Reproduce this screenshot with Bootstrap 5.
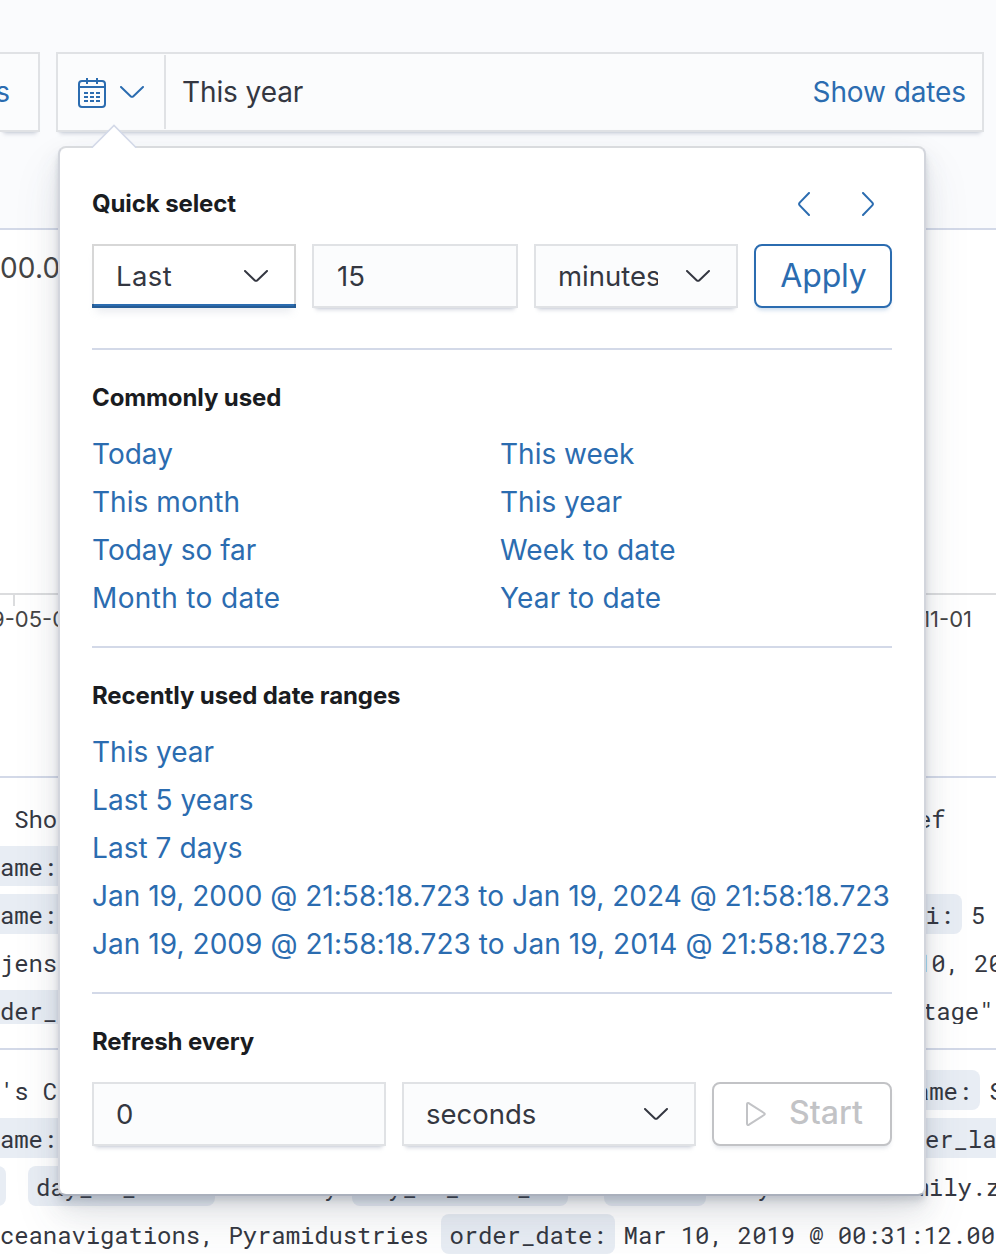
<!DOCTYPE html>
<html lang="en">
<head>
<meta charset="utf-8">
<title>Discover - time filter</title>
<meta name="viewport" content="width=device-width, initial-scale=1">
<link rel="stylesheet" href="https://cdn.jsdelivr.net/npm/bootstrap@5.3.0/dist/css/bootstrap.min.css">
<style>
  :root { --blue: #2b6cb0; --ink: #343741; --field: #fbfcfd; --edge: #e0e2e5; --line: #d3d9e8; }
  body { font-family: Inter, "Liberation Sans", sans-serif; font-size: 28px; line-height: 48px; letter-spacing: -.1px; color: var(--ink); background: #fff; }
  .screen { width: 996px; height: 1254px; }
  svg { display: block; fill: none; stroke: currentColor; stroke-width: 2; stroke-linecap: round; stroke-linejoin: round; }
  .flat { stroke-linecap: butt; }
  .blue { color: var(--blue); }

  /* query bar */
  .querybar { height: 230px; padding-top: 52px; gap: 16px; background: #fafbfd; border-bottom: 2px solid var(--line); }
  .field-box { background: var(--field); border: 2px solid var(--edge); box-shadow: 0 2px 2px -2px rgba(152,162,179,.3), 0 6px 4px -4px rgba(152,162,179,.4); }
  .bar-box { height: 80px; }
  .refresh-tail { width: 40px; border-left: 0; padding-right: 28px; }
  .range-box { width: 928px; }
  .cal-btn { width: 108px; height: 74px; padding-left: 20px; gap: 14px; border-right: 2px solid var(--edge); }
  .cal-icon { margin-top: 2px; }

  /* chart */
  .chart { height: 548px; border-bottom: 2px solid var(--line); color: #444; letter-spacing: 0; }
  .y-label { height: 363px; padding-top: 14px; font-size: 28px; letter-spacing: .2px; }
  .x-axis { height: 2px; background: #dbdcde; }
  .tick { width: 2px; height: 11px; margin-left: 13px; background: #dbdcde; }
  .x-labels { font-size: 22px; line-height: 27px; }
  .x-first { margin-left: -9px; }
  .x-last { margin-right: 24px; }

  /* documents */
  .doc { font-family: "Roboto Mono", "DejaVu Sans Mono", monospace; font-size: 24px; letter-spacing: -.12px; overflow: hidden; }
  .doc-one { height: 272px; padding-top: 16px; border-bottom: 2px solid var(--line); }
  .doc-one .doc-body { height: 230px; overflow: hidden; }
  .doc-two { height: 204px; padding-top: 16px; }
  .doc-line { height: 48px; white-space: pre; }
  .doc-line > :not(.chip):not(.d-flex) { padding-top: 2px; }
  .chip { height: 40px; line-height: 40px; padding: 1px 8px 0; margin-right: 9px; border-radius: 8px; background: #e8edf4; flex: none; }
  .value + .chip { margin-left: 13px; }
  .start-half { width: 900px; flex: none; }
  .from-edge { margin-left: -8px; }
  .chip-end { width: 14px; margin-right: 22px; margin-left: -10px; }
  .t-22 { margin-left: 22px; } .t-17 { margin-left: 17px; } .t-7 { margin-left: 7px; } .t-3 { margin-left: 3px; }

  /* time popover */
  .time-pop { left: 58px; top: 146px; width: 868px; height: 1050px; padding: 32px 32px 0; background: #fff; border: 2px solid #d2d5dc; border-top-color: #d9dbde; border-bottom-color: #aab0bc; border-radius: 8px;
    box-shadow: 0 24px 48px 0 rgba(65,78,101,.1), 0 12px 24px 0 rgba(65,78,101,.1), 0 8px 8px 0 rgba(65,78,101,.1), 0 4px 4px 0 rgba(65,78,101,.1); }
  .pop-arrow { left: 31px; top: -24px; stroke-linejoin: miter; }
  .pop-title { font-size: 24px; font-weight: 700; line-height: 48px; letter-spacing: -.11px; color: #1a1c21; }
  .step-prev { margin-right: 52px; } .step-next { margin-right: 18px; }
  .sep { height: 2px; background: var(--line); }
  .sep-first { margin-top: 40px; }
  .ctl { height: 64px; padding: 0 26px 0 22px; font-size: 27.5px; letter-spacing: 0; border-radius: 0; color: var(--ink); }
  .w-a { width: 204px; } .w-b { width: 206px; } .w-c { width: 294px; }
  input.ctl { background: var(--field); }
  input.w-b { padding-left: 23px; }
  .ctl-focus { border-color: rgba(16,16,16,.17); background: linear-gradient(to top, #2b6cb0 4px, #fff 4px) border-box; box-shadow: 0 8px 8px -4px rgba(152,162,179,.2); letter-spacing: .4px; }
  .clip { width: 100px; overflow: hidden; white-space: nowrap; }
  .act { height: 64px; border: 2px solid; border-radius: 8px; font-size: 32px; line-height: 56px; letter-spacing: -.16px; box-shadow: 0 4px 4px -2px rgba(43,108,176,.25); }
  .act-apply { width: 138px; padding: 0 0 0 1px; color: var(--blue); }
  .act-start { width: 180px; padding: 0 0 0 5px; color: #c2c3c6; gap: 23px; letter-spacing: .1px; font-weight: 500; box-shadow: 0 4px 4px -2px rgba(152,162,179,.3); }
  .act span { display: inline-block; margin-top: -2px; }
  .links { display: grid; line-height: 48px; letter-spacing: 0; }
  .links a { color: var(--blue); text-decoration: none; white-space: nowrap; }
  .links-two { grid-template-columns: 408px 1fr; }
  .links .ls-1 { letter-spacing: .02px; } .links .ls-2 { letter-spacing: .05px; } .links .ls-3 { letter-spacing: .17px; } .links .ls-4 { letter-spacing: .35px; }
</style>
<script src="https://cdn.jsdelivr.net/npm/bootstrap@5.3.0/dist/js/bootstrap.bundle.min.js"></script>
</head>
<body class="m-0 overflow-hidden">
<div class="screen position-relative overflow-hidden">

  <header class="querybar d-flex align-items-start">
    <div class="bar-box field-box refresh-tail d-flex align-items-center justify-content-end blue">s</div>
    <div class="bar-box field-box range-box d-flex align-items-center">
      <div class="cal-btn d-flex align-items-center blue">
        <svg class="cal-icon flat" width="28" height="30" viewBox="0 0 28 30"><rect x="1" y="3" width="26" height="26" rx="3"/><path d="M1 9h26M9 0v6M19 0v6"/><path d="M6 15h16M6 19h16M6 23h16" stroke-dasharray="4 2"/></svg>
        <svg width="24" height="12" viewBox="0 0 24 12"><path d="M1 1l9.600 9.200q1.400 1.200 2.800 0L23 1"/></svg>
      </div>
      <span class="ms-3 flex-grow-1">This year</span>
      <span class="blue me-3">Show dates</span>
    </div>
  </header>

  <section class="chart">
    <div class="y-label">00.0</div>
    <div class="x-axis"></div>
    <div class="tick"></div>
    <div class="x-labels d-flex justify-content-between"><span class="x-first">9-05-01</span><span class="x-last">2019-11-01</span></div>
  </section>

  <section class="doc doc-one">
    <div class="doc-body">
      <div class="doc-line d-flex align-items-center"><div class="start-half"> Sho</div><span class="t-17">ef</span></div>
      <div class="doc-line d-flex align-items-center"><span class="chip from-edge">ame:</span></div>
      <div class="doc-line d-flex align-items-center"><div class="start-half d-flex"><span class="chip from-edge">ame:</span></div><span class="chip t-3">_i:</span><span>5</span></div>
      <div class="doc-line d-flex align-items-center"><div class="start-half">jens</div><span class="t-17">10, 20</span></div>
      <div class="doc-line d-flex align-items-center"><div class="start-half d-flex"><span class="chip from-edge">der_s</span></div><span class="t-22">tage"</span></div>
    </div>
  </section>

  <section class="doc doc-two">
    <div class="doc-line d-flex align-items-center"><div class="start-half">'s C</div><span class="chip t-7">ame:</span><span>S</span></div>
    <div class="doc-line d-flex align-items-center"><div class="start-half d-flex"><span class="chip from-edge">ame:</span></div><span class="chip t-17">er_last</span></div>
    <div class="doc-line d-flex align-items-center"><span class="chip chip-end"></span><span class="chip">day_of_week:</span><span class="value">Saturday</span><span class="chip">day_of_week_i:</span><span class="value">5</span><span class="chip">email:</span><span>sonya@smith-family.zz</span></div>
    <div class="doc-line d-flex align-items-center"><span class="value">ceanavigations, Pyramidustries</span><span class="chip">order_date:</span><span>Mar 10, 2019 @ 00:31:12.000</span></div>
  </section>

  <div class="time-pop position-absolute">
    <svg class="pop-arrow position-absolute" width="46" height="24" viewBox="0 0 46 24"><path d="M1 24L23 2L45 24z" fill="#fff" stroke="none"/><path d="M1 23.500L23 1.500L45 23.500" stroke="#d3d9e8" stroke-width="1.600"/></svg>

    <div class="d-flex align-items-center mb-3">
      <h2 class="pop-title m-0 flex-grow-1">Quick select</h2>
      <svg class="blue step-prev" width="12" height="24" viewBox="0 0 12 24"><path d="M11 1L1.700 10.600q-1.200 1.400 0 2.800L11 23"/></svg>
      <svg class="blue step-next" width="12" height="24" viewBox="0 0 12 24"><path d="M1 1l9.300 9.600q1.200 1.400 0 2.800L1 23"/></svg>
    </div>
    <div class="d-flex gap-3">
      <div class="ctl field-box ctl-focus w-a d-flex align-items-center justify-content-between"><span>Last</span><svg width="24" height="12" viewBox="0 0 24 12"><path d="M1 1l9.600 9.200q1.400 1.200 2.800 0L23 1"/></svg></div>
      <input class="ctl field-box w-b" value="15" aria-label="Count">
      <div class="ctl field-box w-a d-flex align-items-center justify-content-between"><span class="clip">minutes</span><svg width="24" height="12" viewBox="0 0 24 12"><path d="M1 1l9.600 9.200q1.400 1.200 2.800 0L23 1"/></svg></div>
      <button class="btn act act-apply bg-white"><span>Apply</span></button>
    </div>

    <div class="sep sep-first mb-4"></div>
    <h2 class="pop-title m-0 mb-2">Commonly used</h2>
    <div class="links links-two mb-4">
      <a href="#">Today</a><a href="#">This week</a>
      <a href="#" class="ls-2">This month</a><a href="#">This year</a>
      <a href="#">Today so far</a><a href="#" class="ls-3">Week to date</a>
      <a href="#" class="ls-4">Month to date</a><a href="#" class="ls-3">Year to date</a>
    </div>

    <div class="sep mb-4"></div>
    <h2 class="pop-title m-0 mb-2">Recently used date ranges</h2>
    <div class="links mb-4">
      <a href="#">This year</a>
      <a href="#" class="ls-2">Last 5 years</a>
      <a href="#" class="ls-2">Last 7 days</a>
      <a href="#" class="ls-1">Jan 19, 2000 @ 21:58:18.723 to Jan 19, 2024 @ 21:58:18.723</a>
      <a href="#" class="ls-2">Jan 19, 2009 @ 21:58:18.723 to Jan 19, 2014 @ 21:58:18.723</a>
    </div>

    <div class="sep mb-4"></div>
    <h2 class="pop-title m-0 mb-3">Refresh every</h2>
    <div class="d-flex gap-3">
      <input class="ctl field-box w-c" value="0" aria-label="Interval">
      <div class="ctl field-box w-c d-flex align-items-center justify-content-between"><span>seconds</span><svg width="24" height="12" viewBox="0 0 24 12"><path d="M1 1l9.600 9.200q1.400 1.200 2.800 0L23 1"/></svg></div>
      <button class="btn act act-start bg-white d-flex align-items-center justify-content-center"><svg width="20" height="24" viewBox="0 0 20 24"><path d="M1 2.500v19q0 2 2 1.200L18 13q1.600-1 0-2L3 1.300q-2-.8-2 1.200z"/></svg><span>Start</span></button>
    </div>
  </div>
</div>
</body>
</html>
